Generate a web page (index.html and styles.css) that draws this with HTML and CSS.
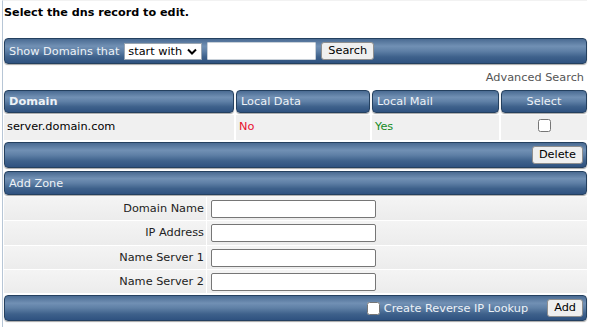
FILE: index.html
```html
<!DOCTYPE html>
<html>
<head>
<meta charset="utf-8">
<link rel="stylesheet" href="styles.css">
</head>
<body>
<div class="page">
  <div class="title">Select the dns record to edit.</div>

  <form class="bar search-bar">
    <span class="bar-label">Show Domains that</span>
    <select class="sel"><option>start with</option></select>
    <input class="txt search-input" type="text">
    <button class="btn" type="button">Search</button>
  </form>

  <div class="adv">Advanced Search</div>

  <div class="dgrid">
    <div class="bar hcell bold">Domain</div>
    <div class="bar hcell">Local Data</div>
    <div class="bar hcell">Local Mail</div>
    <div class="bar hcell center">Select</div>
    <div class="dcell">server.domain.com</div>
    <div class="dcell no">No</div>
    <div class="dcell yes">Yes</div>
    <div class="dcell center"><input class="cb" type="checkbox"></div>
  </div>

  <div class="bar action-bar">
    <button class="btn" type="button">Delete</button>
  </div>

  <div class="bar zone-bar"><span class="bar-label">Add Zone</span></div>

  <div class="fgrid">
    <div class="flabel">Domain Name</div><div class="finput"><input class="txt field" type="text"></div>
    <div class="flabel">IP Address</div><div class="finput"><input class="txt field" type="text"></div>
    <div class="flabel">Name Server 1</div><div class="finput"><input class="txt field" type="text"></div>
    <div class="flabel">Name Server 2</div><div class="finput"><input class="txt field" type="text"></div>
  </div>

  <div class="bar action-bar bottom-bar">
    <label class="rev"><input class="cb" type="checkbox"> Create Reverse IP Lookup</label>
    <button class="btn" type="button">Add</button>
  </div>
</div>
</body>
</html>
```

FILE: styles.css
```css
html, body {
  margin: 0;
  padding: 0;
  background: #ffffff;
}
body {
  font-family: "DejaVu Sans", Verdana, sans-serif;
  font-size: 11.3px;
  color: #000;
}
.page {
  margin-left: 2px;
  border-left: 1px solid #b7c6d6;
  border-top: 1px solid #f2f2f2;
  padding-left: 1px;
  width: 583px;
  min-height: 326px;
  box-shadow: 2px 0 0 #ffffff, 3px 0 1px #e4e4e4;
}
.title {
  font-weight: bold;
  font-size: 11.2px;
  height: 14px;
  line-height: 14px;
  padding-top: 5px;
  margin-bottom: 18px;
}
.bar {
  background: linear-gradient(#4a6b92 0%, #7190b4 30%, #5f80a6 50%, #3e618b 75%, #2f5280 100%);
  border: 1px solid #24405f;
  border-radius: 4px;
  box-shadow: 0 1px 1px rgba(0,0,0,0.35);
  color: #edf2f7;
  box-sizing: border-box;
}
.search-bar {
  margin: 0;
  height: 26px;
  display: flex;
  align-items: center;
  padding: 0 4px;
}
.sel {
  appearance: none;
  -webkit-appearance: none;
  margin-left: 5px;
  height: 17px;
  width: 78px;
  box-sizing: border-box;
  font-family: "DejaVu Sans", Verdana, sans-serif;
  font-size: 11.3px;
  color: #000;
  border: 1px solid #9aa6b2;
  background: #fff url("data:image/svg+xml,%3Csvg xmlns='http://www.w3.org/2000/svg' width='10' height='7'%3E%3Cpath d='M1 1.5l4 4 4-4' fill='none' stroke='%23000' stroke-width='2'/%3E%3C/svg%3E") no-repeat right 4px center;
  padding: 0 0 0 3px;
  border-radius: 0;
}
.txt {
  box-sizing: border-box;
  height: 18px;
  border: 1px solid #767676;
  border-radius: 2px;
  background: #fff;
  padding: 0 2px;
  font-family: "DejaVu Sans", Verdana, sans-serif;
  font-size: 11.3px;
}
.search-input {
  margin-left: 5px;
  width: 109px;
  height: 18px;
  border-color: #c8d0d8;
  border-radius: 1px;
}
.btn {
  margin-left: 5px;
  height: 18px;
  padding: 0 6px;
  font-family: "DejaVu Sans", Verdana, sans-serif;
  font-size: 11.3px;
  color: #000;
  background: #efefef;
  border: 1px solid #8f8f8f;
  border-radius: 3px;
  line-height: 14px;
}
.adv {
  text-align: right;
  color: #555;
  height: 26px;
  line-height: 28px;
  padding-right: 3px;
}
.dgrid {
  display: grid;
  grid-template-columns: 230px 134px 127px 86px;
  column-gap: 2px;
  row-gap: 2px;
}
.hcell {
  height: 23px;
  line-height: 21px;
  padding: 0 4px;
}
.bold { font-weight: bold; }
.center { text-align: center; }
.dcell {
  background: #f0f0f0;
  height: 25px;
  line-height: 24px;
  padding: 0 3px;
}
.no { color: #e8112d; }
.yes { color: #168c26; }
.cb {
  width: 13px;
  height: 13px;
  margin: 0;
  vertical-align: -2px;
}
.action-bar {
  margin-top: 2px;
  height: 26px;
  display: flex;
  align-items: center;
  justify-content: flex-end;
  padding: 0 3px;
}
.zone-bar {
  margin-top: 3px;
  height: 24px;
  display: flex;
  align-items: center;
  padding: 0 4px;
}
.fgrid {
  display: grid;
  grid-template-columns: 202px 1fr;
  column-gap: 1px;
  row-gap: 1px;
  margin-top: 2px;
}
.flabel, .finput {
  background: linear-gradient(#f4f4f4, #ececec);
  height: 23.3px;
  display: flex;
  align-items: center;
}
.flabel {
  justify-content: flex-end;
  padding-right: 2px;
  color: #222;
}
.finput {
  padding-left: 4px;
}
.field {
  width: 165px;
  height: 18px;
  margin-top: 1px;
}
.bottom-bar {
  margin-top: 2px;
  height: 26px;
}
.rev {
  display: flex;
  align-items: center;
  gap: 4px;
  margin-right: 14px;
}
```
